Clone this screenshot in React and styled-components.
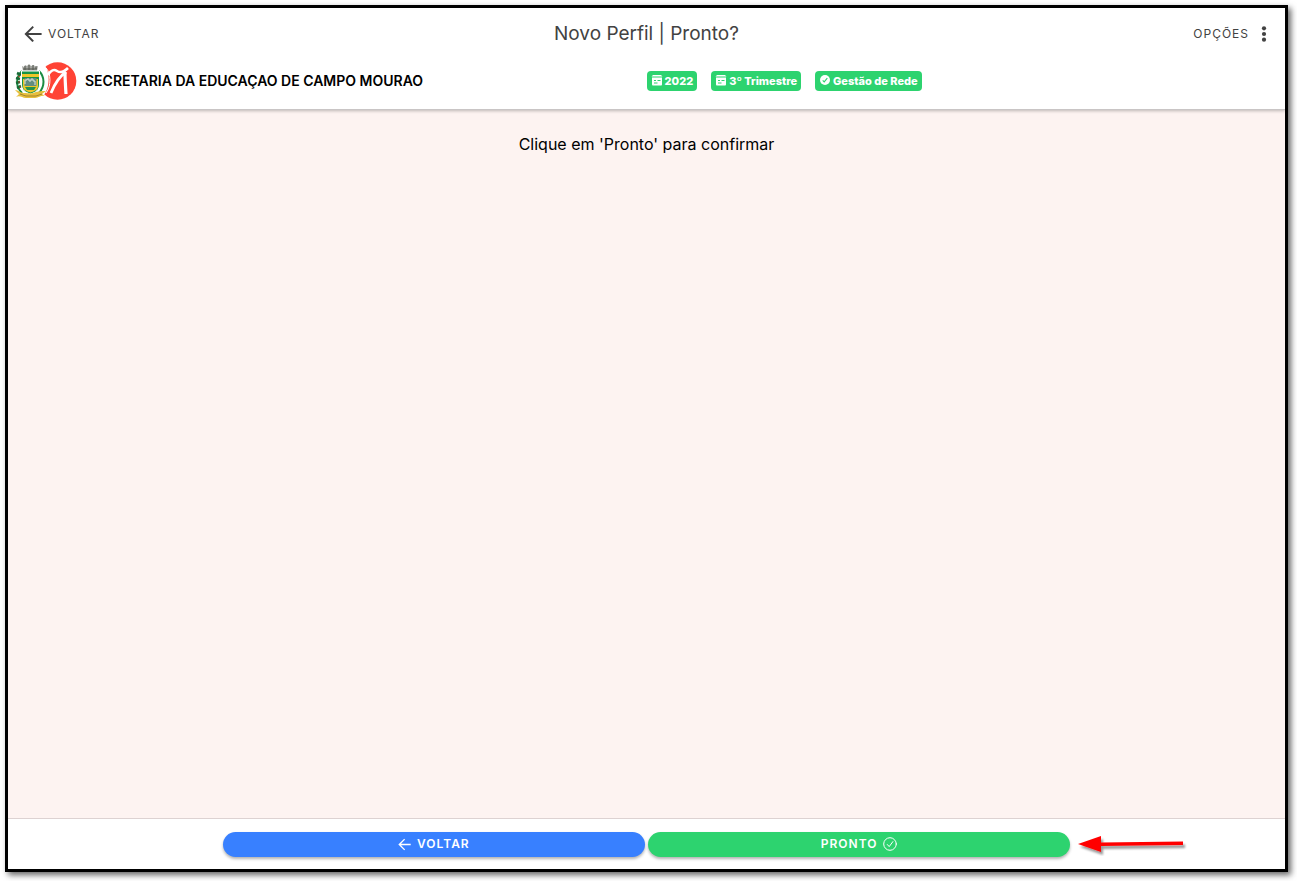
import React from "react";
import styled, { createGlobalStyle } from "styled-components";

const GlobalStyle = createGlobalStyle`
  *, *::before, *::after { box-sizing: border-box; }
  body {
    margin: 0;
    background: #fff;
    color: #000;
    font-family: Inter, "Liberation Sans", sans-serif;
  }
  button { font-family: inherit; cursor: pointer; }
  svg { display: block; flex: none; }
`;

const Page = styled.div`
  min-height: 100vh;
  display: flex;
  padding: 5px 9px 9px 5px;
`;

const Frame = styled.div`
  flex: 1;
  min-width: 0;
  display: flex;
  flex-direction: column;
  border: 3px solid #000;
  background: #fff;
  box-shadow: 3px 3px 6px rgba(0, 0, 0, 0.6);
`;

const Header = styled.header`
  height: 102px;
  border-bottom: 1px solid #c9c5c5;
  box-shadow: 0 1px 3px rgba(0, 0, 0, 0.25);
  z-index: 1;
`;

const Toolbar = styled.div`
  display: grid;
  grid-template-columns: 1fr auto 1fr;
  align-items: center;
  height: 51px;
  padding: 0 16px;
`;

const ToolButton = styled.button`
  display: flex;
  align-items: center;
  justify-self: ${(p) => (p.$end ? "end" : "start")};
  gap: ${(p) => (p.$end ? 10 : 6)}px;
  padding: 0;
  border: 0;
  background: none;
  color: #424242;
  font-size: 12px;
  line-height: 20px;
  letter-spacing: 1px;
`;

const Title = styled.h1`
  margin: 0;
  color: #424242;
  font-size: 19px;
  font-weight: 400;
  line-height: 24px;
`;

const Institution = styled.div`
  display: grid;
  grid-template-columns: 1fr 1fr;
  align-items: center;
  height: 44px;
`;

const Identity = styled.div`
  display: flex;
  align-items: center;
  gap: 8px;
  padding-left: 7px;
`;

const Name = styled.h2`
  margin: 0;
  font-size: 14px;
  font-weight: 600;
  line-height: 20px;
  white-space: nowrap;
`;

const Badges = styled.div`
  display: flex;
  gap: 14px;
`;

const Badge = styled.span`
  display: flex;
  align-items: center;
  gap: 2px;
  height: 20px;
  padding: 0 4px;
  border-radius: 4px;
  background: #2dd36f;
  color: #fff;
  font-size: 11px;
  font-weight: 800;
  line-height: 20px;
  white-space: nowrap;
`;

const Content = styled.main`
  flex: 1;
  padding: 24px 16px;
  background: #fdf3f1;
  text-align: center;
`;

const Message = styled.p`
  margin: 0;
  font-size: 16px;
  line-height: 20px;
`;

const Footer = styled.footer`
  display: grid;
  grid-template-columns: 1fr 4fr 1fr;
  align-items: center;
  height: 51px;
  border-top: 1px solid #ddd2d2;
`;

const Actions = styled.div`
  grid-column: 2;
  display: grid;
  grid-template-columns: 1fr 1fr;
  gap: 3px;
  padding: 0 2px;
`;

const ActionButton = styled.button`
  display: flex;
  align-items: center;
  justify-content: center;
  gap: 6px;
  height: 25px;
  padding: 0;
  border: 0;
  border-radius: 13px;
  background: ${(p) => p.$color};
  box-shadow: 0 2px 3px rgba(0, 0, 0, 0.3);
  color: #fff;
  font-size: 12px;
  font-weight: 600;
  line-height: 24px;
  letter-spacing: 1px;
`;

const Pointer = styled.svg`
  margin-left: 5px;
`;

const BackArrow = ({ size, width }) => (
  <svg width={size} height={size} viewBox="0 0 16 16" fill="none" stroke="currentColor" strokeWidth={width} strokeLinecap="square" aria-hidden="true">
    <path d="M7.6 2 1.6 8l6 6M2 8h12.800" />
  </svg>
);

const Dots = () => (
  <svg width="10" height="18" viewBox="0 0 10 18" fill="currentColor" aria-hidden="true">
    <circle cx="5" cy="3.3" r="2.1" />
    <circle cx="5" cy="9" r="2.1" />
    <circle cx="5" cy="14.7" r="2.1" />
  </svg>
);

const CalendarIcon = () => (
  <svg width="12" height="12" viewBox="0 0 12 12" aria-hidden="true">
    <path d="M2 0h8l1.500 1.500H.5z" fill="#fff" />
    <path d="M1 2.500h10v6.500c0 1-.4 1.500-1.200 1.500H2.200C1.400 10.500 1 10 1 9z" fill="#fff" />
    <path d="M3 5.500h2M6.500 5.500h3M3 8h3.500" stroke="#2dd36f" strokeWidth="1" />
  </svg>
);

const BadgeCheck = () => (
  <svg width="12" height="12" viewBox="0 0 12 12" aria-hidden="true">
    <circle cx="6" cy="5" r="5" fill="#fff" />
    <path d="m3.700 5.300 1.500 1.600 3.100-3.800" fill="none" stroke="#2dd36f" strokeWidth="1.100" />
  </svg>
);

const CheckCircle = () => (
  <svg width="14" height="14" viewBox="0 0 14 14" fill="none" stroke="currentColor" strokeLinecap="round" strokeLinejoin="round" aria-hidden="true">
    <circle cx="7" cy="7" r="6.300" />
    <path d="m4.300 7.500 1.900 2.100 3.700-5" />
  </svg>
);

const Emblems = () => (
  <svg width="62" height="40" viewBox="0 0 62 40" role="img" aria-label="Campo Mourão">
    <circle cx="42.500" cy="20" r="18.800" fill="#ff4335" />
    <path d="M29 4C35 9 36 28 27 36L18 38V3z" fill="#fff" />
    <path d="M31 7c5 5 5.500 18 0 25" fill="none" stroke="#fff" strokeWidth="1" />
    <path d="M33 14c3-5 6-6 9-4s7 1 11-3" fill="none" stroke="#fff" strokeWidth="2.500" />
    <path d="M51 11c-6 4-11 11-15 21" fill="none" stroke="#fff" strokeWidth="2.800" />
    <path d="M50 11c0 7 .5 14 1 22" fill="none" stroke="#fff" strokeWidth="3.200" />
    <path d="M7 10c-6 6-7 15 0 22M24 10c6 6 6 15 0 22" fill="none" stroke="#1b8b42" strokeWidth="2" />
    <path d="m2 12 4 2m-5 3 4 1m-4 4 4-1m-3 6 4-2" stroke="#176b36" strokeWidth="2.600" />
    <path d="m3 15 2 1m-2 5h2m-1 5h2" stroke="#b73b26" strokeWidth="1" />
    <path d="m7 5 2 1 1-2 2 1 2-2 2 2 3-1 1 2 3-1-1 5H8z" fill="#a5a7a2" />
    <path d="M8 8h14M10 5v4m4-5v5m4-5v5m3-4v3" stroke="#53564f" strokeWidth="1" />
    <path d="M6.500 10h18v13c0 6-4 8.500-9 10-5-1.500-9-4-9-10z" fill="#169447" stroke="#fff" strokeWidth="1" />
    <path d="M7 13h17v3H7zM8 18h15v7c0 4-3 5-7.500 6.500C11 30 8 29 8 25z" fill="#efc629" />
    <path d="M9.500 17h12v8h-12z" fill="#638c80" />
    <path d="M10 23v-4h2v-1h2v2h2v-2h2v2h2v4" fill="none" stroke="#dbe5db" strokeWidth="1" />
    <path d="M10 26h11l-2 3h-7z" fill="#25934c" />
    <path d="M0 29c4 0 5 3 9 3 5 0 8 1 12-1 4-1 5-1 10-1l-4 3 3 2c-4-1-6 2-10 2H11c-4 0-6-3-10-1l3-3z" fill="#e6bf3d" />
    <path d="m5 33 6 2h10l6-2" fill="none" stroke="#a8842b" strokeWidth="1" />
  </svg>
);

export default function App() {
  return (
    <Page>
      <GlobalStyle />
      <Frame>
        <Header>
          <Toolbar>
            <ToolButton type="button"><BackArrow size={18} width={1.7} />VOLTAR</ToolButton>
            <Title>Novo Perfil | Pronto?</Title>
            <ToolButton type="button" $end>OPÇÕES<Dots /></ToolButton>
          </Toolbar>
          <Institution>
            <Identity>
              <Emblems />
              <Name>SECRETARIA DA EDUCAÇAO DE CAMPO MOURAO</Name>
            </Identity>
            <Badges>
              <Badge><CalendarIcon />2022</Badge>
              <Badge><CalendarIcon />3º Trimestre</Badge>
              <Badge><BadgeCheck />Gestão de Rede</Badge>
            </Badges>
          </Institution>
        </Header>
        <Content>
          <Message>Clique em 'Pronto' para confirmar</Message>
        </Content>
        <Footer>
          <Actions>
            <ActionButton type="button" $color="#3880ff"><BackArrow size={13} width={1.7} />VOLTAR</ActionButton>
            <ActionButton type="button" $color="#2dd36f">PRONTO<CheckCircle /></ActionButton>
          </Actions>
          <Pointer width="114" height="24" viewBox="0 0 114 24" aria-hidden="true">
            <defs>
              <filter id="pointerShadow" x="-10%" y="-30%" width="125%" height="190%">
                <feDropShadow dx="2" dy="3" stdDeviation="1" floodOpacity="0.4" />
              </filter>
            </defs>
            <path d="m1 12 23-8v6.500l82-1v3.500l-82 1v6z" fill="#f00" filter="url(#pointerShadow)" />
          </Pointer>
        </Footer>
      </Frame>
    </Page>
  );
}
